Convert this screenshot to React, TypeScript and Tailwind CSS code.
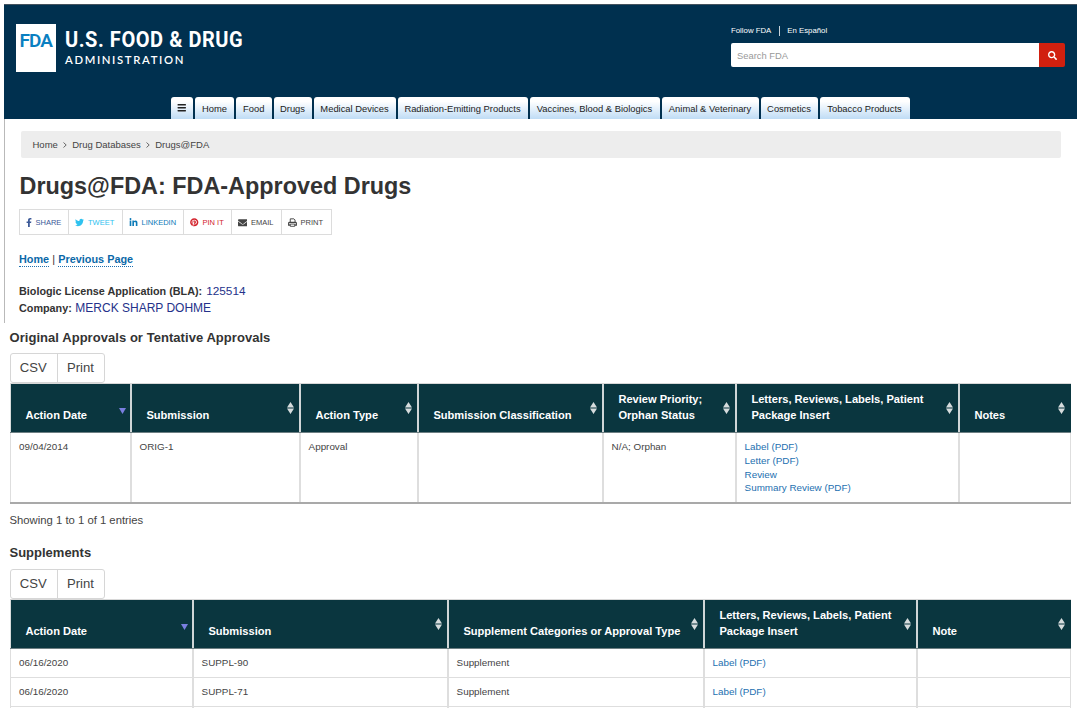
import type { ReactNode } from "react";
import {
  FaBars,
  FaEnvelope,
  FaFacebookF,
  FaLinkedinIn,
  FaPinterest,
  FaSearch,
  FaTwitter,
} from "react-icons/fa";

const tabs = [
  { label: "Home", width: "w-[39px]" },
  { label: "Food", width: "w-[35.5px]" },
  { label: "Drugs", width: "w-[38px]" },
  { label: "Medical Devices", width: "w-[82px]" },
  { label: "Radiation-Emitting Products", width: "w-[130px]" },
  { label: "Vaccines, Blood & Biologics", width: "w-[130px]" },
  { label: "Animal & Veterinary", width: "w-[97px]" },
  { label: "Cosmetics", width: "w-[57px]" },
  { label: "Tobacco Products", width: "w-[90px]" },
];

function PrintIcon() {
  return (
    <svg viewBox="0 0 16 16" className="h-[9px] w-[9px]" fill="none" stroke="currentColor">
      <path d="M4 8V1.5h6.5L12.5 3.5V8" strokeWidth="1.7" />
      <path d="M4 12.5H1.2V9.2C1.2 8.4 1.8 7.8 2.6 7.8h10.8c.8 0 1.4.6 1.4 1.4v3.3H12" strokeWidth="2.2" />
      <path d="M4 10.8h8v4H4z" strokeWidth="1.6" />
    </svg>
  );
}

const shares: { label: string; icon: ReactNode; box: string }[] = [
  { label: "SHARE", icon: <FaFacebookF className="h-[9px] w-[6px]" />, box: "w-[49px] pl-[6px] gap-[3.5px] text-[#3b5998]" },
  { label: "TWEET", icon: <FaTwitter className="size-[9px]" />, box: "w-[54px] pl-[6px] gap-[4px] text-[#2fc2ef]" },
  { label: "LINKEDIN", icon: <FaLinkedinIn className="size-[9px]" />, box: "w-[61px] pl-[5.5px] gap-[4px] text-[#0d7bb8]" },
  { label: "PIN IT", icon: <FaPinterest className="size-[8.5px]" />, box: "w-[47.5px] pl-[6px] gap-[4px] text-[#d3232c]" },
  { label: "EMAIL", icon: <FaEnvelope className="size-[9.5px]" />, box: "w-[50px] pl-[6px] gap-[4px] text-[#444]" },
  { label: "PRINT", icon: <PrintIcon />, box: "w-[50.5px] pl-[6px] gap-[4px] text-[#444]" },
];

function SortMark({ active }: { active?: boolean }) {
  if (active) {
    return (
      <svg viewBox="0 0 6 6" className="mr-[4px] mt-[24px] h-[6px] w-[7px] shrink-0" preserveAspectRatio="none">
        <path d="M0 0h6L3 6z" fill="#7a7fe0" />
      </svg>
    );
  }
  return (
    <svg viewBox="0 0 7 12" className="mr-[5px] mt-[18px] h-[12px] w-[7px] shrink-0">
      <path d="M0 5.5 3.5 0 7 5.5zM0 6.5h7L3.5 12z" fill="#d6dcdd" />
    </svg>
  );
}

type Column = { title: ReactNode; active?: boolean };

function HeaderRow({ columns, grid }: { columns: Column[]; grid: string }) {
  return (
    <div className={`grid h-[49px] border-b border-[#6d7f83] bg-[#0a363f] ${grid}`}>
      {columns.map((column, i) => (
        <div
          key={i}
          className={`flex justify-between pl-[14.4px] ${i === 0 ? "border-l border-[#d8dcdc]" : "border-l-2 border-[#d0d6d7]"}`}
        >
          <div className="self-end whitespace-nowrap pb-[9px] text-[11.1px] font-bold leading-[15.5px] text-white">
            {column.title}
          </div>
          <SortMark active={column.active} />
        </div>
      ))}
    </div>
  );
}

function BodyRow({ cells, grid, height }: { cells: ReactNode[]; grid: string; height: string }) {
  return (
    <div className={`grid border-r border-[#dedede] ${grid} ${height}`}>
      {cells.map((cell, i) => (
        <div
          key={i}
          className={`whitespace-nowrap border-[#dedede] pt-[7px] text-[9.85px] leading-[13.8px] text-[#444] ${i === 0 ? "border-l pl-[8px]" : "border-l-2 pl-[7.6px]"}`}
        >
          {cell}
        </div>
      ))}
    </div>
  );
}

function ExportButtons() {
  return (
    <div className="flex h-[30px] w-[95px] rounded-[3px] border border-[#d6d6d6] text-[13.1px] leading-[28px] text-[#444]">
      <div className="w-[47px] border-r border-[#d6d6d6] pl-[9.3px]">CSV</div>
      <div className="pl-[9.5px]">Print</div>
    </div>
  );
}

const approvalsGrid = "grid-cols-[120px_169px_118px_185px_133px_223px_112px]";
const supplementsGrid = "grid-cols-[182px_255px_256px_213px_154px]";

const lettersTitle = (
  <>
    Letters, Reviews, Labels, Patient
    <br />
    Package Insert
  </>
);

function PdfLink({ children }: { children: ReactNode }) {
  return <a className="block text-[#1c6fb0]">{children}</a>;
}

export default function App() {
  return (
    <div className="h-[711px] w-[1080px] overflow-hidden bg-white pl-[4px] pt-[4px] font-['Liberation_Sans',Arial,sans-serif] text-[#333]">
      <div className="h-[319px] border-l border-[#b9b9b9]">
        <header className="-ml-px flex h-[115px] w-[1072.5px] flex-col justify-between border-t border-[#44525e] bg-[#00304f]">
          <div className="flex justify-between">
            <div className="flex pl-[12px] pt-[19px]">
              <div className="h-[48px] w-[40px] bg-white pl-[3.5px] pt-[7px] font-['Roboto',sans-serif] text-[19px] font-semibold leading-[19px] tracking-[-1px] text-[#0a7fc1]">
                FDA
              </div>
              <div className="pl-[9px] pt-[3px] text-white">
                <div className="origin-left scale-x-[0.91] whitespace-nowrap font-['Roboto',sans-serif] text-[22px] font-bold leading-[26px] tracking-[0.6px]">
                  U.S. FOOD &amp; DRUG
                </div>
                <div className="whitespace-nowrap pt-px font-['Lato',sans-serif] text-[11.3px] font-semibold leading-[12px] tracking-[1.65px]">
                  ADMINISTRATION
                </div>
              </div>
            </div>
            <div className="w-[345.5px] pt-[19px]">
              <div className="flex h-[13px] items-center text-[7.8px] text-white">
                <span>Follow FDA</span>
                <span className="mx-[7.5px] h-[10px] w-px bg-[#c8d3da]" />
                <span>En Español</span>
              </div>
              <div className="mt-[6px] flex h-[24px] w-[334px]">
                <div className="flex-1 rounded-l-[2px] bg-white pl-[6px] text-[9.4px] leading-[25px] text-[#999]">Search FDA</div>
                <button className="flex w-[26px] items-center justify-center rounded-r-[2px] bg-[#d1200f] text-white">
                  <FaSearch className="size-[9px]" />
                </button>
              </div>
            </div>
          </div>
          <nav className="flex gap-[2px] pl-[167px] text-[9.4px] leading-[23px] text-[#222]">
            <div className="flex h-[22px] w-[22px] items-center justify-center rounded-t-[3px] bg-gradient-to-b from-white from-20% to-[#bfdcf5]">
              <FaBars className="size-[9.5px]" />
            </div>
            {tabs.map((tab) => (
              <a
                key={tab.label}
                className={`h-[22px] whitespace-nowrap rounded-t-[3px] bg-gradient-to-b from-white from-20% to-[#bfdcf5] text-center ${tab.width}`}
              >
                {tab.label}
              </a>
            ))}
          </nav>
        </header>

        <div className="ml-[16px] mt-[12px] flex h-[27px] w-[1040px] items-center rounded-[2px] bg-[#ededed] pl-[11.5px] pt-px text-[9.5px] text-[#444]">
          <span>Home</span>
          <svg viewBox="0 0 4 6" className="mx-[5.2px] h-[6px] w-[4px]" fill="none" stroke="#666">
            <path d="M.5.5 3.2 3 .5 5.5" />
          </svg>
          <span>Drug Databases</span>
          <svg viewBox="0 0 4 6" className="mx-[5.2px] h-[6px] w-[4px]" fill="none" stroke="#666">
            <path d="M.5.5 3.2 3 .5 5.5" />
          </svg>
          <span>Drugs@FDA</span>
        </div>

        <div className="pl-[14px]">
          <h1 className="h-[42px] pl-[0.5px] pt-[14px] text-[23.4px] font-bold leading-[29px] text-[#333]">Drugs@FDA: FDA-Approved Drugs</h1>
          <div className="mt-[9px] flex h-[26px] w-[313px] border-l border-t border-[#dcdcdc]">
            {shares.map((share) => (
              <a key={share.label} className={`flex items-center whitespace-nowrap border-b border-r border-[#dcdcdc] pt-px text-[7.5px] ${share.box}`}>
                {share.icon}
                <span>{share.label}</span>
              </a>
            ))}
          </div>
          <div className="mt-[18px] flex h-[14px] text-[10.85px] font-bold leading-[13px]">
            <a className="border-b border-dotted border-[#1c6fb0] text-[#0b68a8]">Home</a>
            <span className="px-[3.2px] font-normal">|</span>
            <a className="border-b border-dotted border-[#1c6fb0] text-[#0b68a8]">Previous Page</a>
          </div>
          <div className="mt-[16px] text-[10.8px] font-bold leading-[17px]">
            <div className="flex h-[17px] items-center gap-[4px]">
              Biologic License Application (BLA):
              <span className="text-[11.8px] font-normal text-[#24328a]">125514</span>
            </div>
            <div className="flex h-[17px] items-center gap-[3.5px]">
              Company:
              <span className="text-[12px] font-normal text-[#24328a]">MERCK SHARP DOHME</span>
            </div>
          </div>
        </div>
      </div>

      <main className="pl-[5.5px]">
        <h2 className="pt-[6px] text-[13px] font-bold leading-[17px] tracking-[0.05px]">Original Approvals or Tentative Approvals</h2>
        <div className="mt-[7px]">
          <ExportButtons />
        </div>
        <section className="ml-[0.5px] w-[1061px] border-b-2 border-t border-b-[#a9a9a9] border-t-[#d8d8d8]">
          <HeaderRow
            grid={approvalsGrid}
            columns={[
              { title: "Action Date", active: true },
              { title: "Submission" },
              { title: "Action Type" },
              { title: "Submission Classification" },
              {
                title: (
                  <>
                    Review Priority;
                    <br />
                    Orphan Status
                  </>
                ),
              },
              { title: lettersTitle },
              { title: "Notes" },
            ]}
          />
          <BodyRow
            grid={approvalsGrid}
            height="h-[69px]"
            cells={[
              "09/04/2014",
              "ORIG-1",
              "Approval",
              "",
              "N/A; Orphan",
              <>
                <PdfLink>Label (PDF)</PdfLink>
                <PdfLink>Letter (PDF)</PdfLink>
                <PdfLink>Review</PdfLink>
                <PdfLink>Summary Review (PDF)</PdfLink>
              </>,
              "",
            ]}
          />
        </section>
        <p className="mt-[8px] text-[11.3px] leading-[16px] text-[#444]">Showing 1 to 1 of 1 entries</p>
        <h2 className="mt-[17px] text-[13px] font-bold leading-[16px]">Supplements</h2>
        <div className="mt-[8px]">
          <ExportButtons />
        </div>
        <section className="ml-[0.5px] w-[1061px] border-t border-[#d8d8d8]">
          <HeaderRow
            grid={supplementsGrid}
            columns={[
              { title: "Action Date", active: true },
              { title: "Submission" },
              { title: "Supplement Categories or Approval Type" },
              { title: lettersTitle },
              { title: "Note" },
            ]}
          />
          {["SUPPL-90", "SUPPL-71"].map((submission) => (
            <div key={submission} className="border-b-[1.5px] border-[#dedede]">
              <BodyRow
                grid={supplementsGrid}
                height="h-[28px]"
                cells={["06/16/2020", submission, "Supplement", <PdfLink>Label (PDF)</PdfLink>, ""]}
              />
            </div>
          ))}
          <BodyRow grid={supplementsGrid} height="h-[1px] overflow-hidden" cells={["", "", "", "", ""]} />
        </section>
      </main>
    </div>
  );
}
